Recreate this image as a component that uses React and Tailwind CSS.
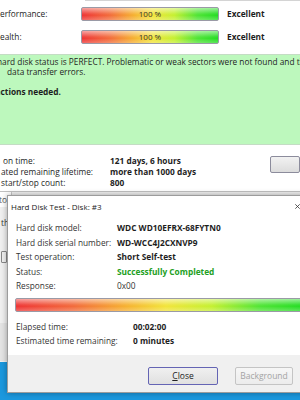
import React from "react";

function Bar({ label, className }) {
  return (
    <div className={"relative rounded-[2px] border border-[#9a9aa6] overflow-hidden bg-[linear-gradient(to_right,#ee3434_0%,#f26a3a_20%,#f6b030_38%,#f2e43a_52%,#c4f030_68%,#4ee434_85%,#22dc22_100%)] " + className}>
      <div className="absolute inset-0 bg-[linear-gradient(to_bottom,rgba(255,255,255,0.55)_0%,rgba(255,255,255,0.1)_45%,rgba(255,255,255,0)_60%,rgba(255,255,255,0.25)_100%)]" />
      {label && (
        <div className="relative flex h-full items-center justify-center text-[8px] leading-none text-[#333]">{label}</div>
      )}
    </div>
  );
}

export default function App() {
  return (
    <div
      className="relative h-[400px] w-[300px] overflow-hidden bg-white text-[8.3px] text-[#1e1e1e]"
      style={{ fontFamily: '"Open Sans", "Noto Sans", sans-serif' }}
    >
      {/* background window */}
      <div className="flex h-full flex-col">
        <div className="ml-[85px] h-px bg-[#d4d4d4]" />
        <div className="flex flex-col gap-[9px] pt-[6px]">
          <div className="flex h-[14px] items-center">
            <div className="w-[81px] whitespace-nowrap">erformance:</div>
            <Bar label="100 %" className="h-[14px] w-[138px]" />
            <div className="ml-[8px] font-bold">Excellent</div>
          </div>
          <div className="flex h-[14px] items-center">
            <div className="w-[81px] whitespace-nowrap">ealth:</div>
            <Bar label="100 %" className="h-[14px] w-[138px]" />
            <div className="ml-[8px] font-bold">Excellent</div>
          </div>
        </div>
        <div className="mt-[10px] h-[91px] border-y border-[#c4dcc4] bg-[#bdf8bd] pt-[2px] leading-[10px]">
          <div className="-ml-[3px] whitespace-nowrap">hard disk status is PERFECT. Problematic or weak sectors were not found and there are no</div>
          <div className="ml-[7px] whitespace-nowrap">data transfer errors.</div>
          <div className="h-[10px]" />
          <div className="-ml-[4.5px] whitespace-nowrap font-bold">actions needed.</div>
        </div>
        <div className="flex pt-[10px]">
          <div className="grid w-[289px] grid-cols-[110px_1fr] leading-[11px]">
            <div className="pl-[3px]">on time:</div>
            <div className="font-bold">121 days, 6 hours</div>
            <div className="whitespace-nowrap pl-[1px]">ated remaining lifetime:</div>
            <div className="font-bold">more than 1000 days</div>
            <div className="pl-[1px]">start/stop count:</div>
            <div className="font-bold">800</div>
          </div>
          <div className="mt-[1px] h-[17px] w-[30px] shrink-0 rounded-[2px] border border-[#8c8c9c] bg-[linear-gradient(to_bottom,#f2f2f2,#dcdcdc)]" />
        </div>
        <div className="mt-[3px] h-px bg-[#c0c0c0]" />
        <div className="flex h-[170px] flex-col bg-[#f0f0f0]">
          <div className="h-[15px] w-[12px] border-r border-[#c8c8c8] bg-white pt-[2px] text-[#555]">
            <span className="-ml-[1px]">to</span>
          </div>
          <div className="mt-[10px] pl-[1px] text-[#333]">th</div>
          <div className="ml-[1px] mt-[22px] h-[12px] w-[6px] rounded-[1px] border border-[#888]" />
          <div className="mt-[60px] h-[38px] bg-[#e4e4e4]" />
        </div>
        <div className="flex-1 bg-[#1b98de]" />
      </div>

      {/* dialog */}
      <div className="absolute left-[7px] top-[195px] flex h-[198px] w-[306px] flex-col border border-[#9c9c9c] bg-white shadow-[0_0_6px_rgba(0,0,0,0.35)]">
        <div className="flex h-[21px] shrink-0 items-center">
          <div className="pl-[3px] text-[8px] text-[#1a1a1a]">Hard Disk Test - Disk: #3</div>
          <div className="ml-auto flex h-full w-[30px] items-center justify-center">
            <svg width="5" height="5" viewBox="0 0 5 5">
              <path d="M0.3 0.3 L4.7 4.7 M4.7 0.3 L0.3 4.7" stroke="#333" strokeWidth="0.8" />
            </svg>
          </div>
        </div>
        <div className="flex flex-1 flex-col pl-[8px] pr-[7px] pt-[4px]">
          <div className="grid grid-cols-[101px_1fr] leading-[14.5px]">
            <div className="text-[#333]">Hard disk model:</div>
            <div className="font-bold">WDC WD10EFRX-68FYTN0</div>
            <div className="text-[#333]">Hard disk serial number:</div>
            <div className="font-bold">WD-WCC4J2CXNVP9</div>
            <div className="text-[#333]">Test operation:</div>
            <div className="font-bold">Short Self-test</div>
            <div className="text-[#333]">Status:</div>
            <div className="font-bold text-[#23a023]">Successfully Completed</div>
            <div className="text-[#333]">Response:</div>
            <div className="text-[#333]">0x00</div>
          </div>
          <Bar className="-ml-[1px] mt-[4.5px] h-[14px]" />
          <div className="mt-[7.5px] grid grid-cols-[117px_1fr] leading-[14.5px]">
            <div className="text-[#333]">Elapsed time:</div>
            <div className="font-bold">00:02:00</div>
            <div className="text-[#333]">Estimated time remaining:</div>
            <div className="font-bold">0 minutes</div>
          </div>
        </div>
        <div className="flex h-[37px] shrink-0 justify-end gap-[17px] bg-[#f0f0f0] pr-[19px] pt-[12px]">
          <div className="flex h-[18px] w-[70px] items-center justify-center rounded-[2px] border border-[#6464b4] bg-[linear-gradient(to_bottom,#f0f0f0,#e0e0e0)] text-[8.5px] text-[#222]">
            <span><span className="underline">C</span>lose</span>
          </div>
          <div className="flex h-[18px] w-[58px] items-center justify-center rounded-[2px] border border-[#c4c4c4] bg-[linear-gradient(to_bottom,#f6f6f6,#ececec)] text-[8.5px] text-[#a4a4a4]">
            Background
          </div>
        </div>
      </div>
    </div>
  );
}
